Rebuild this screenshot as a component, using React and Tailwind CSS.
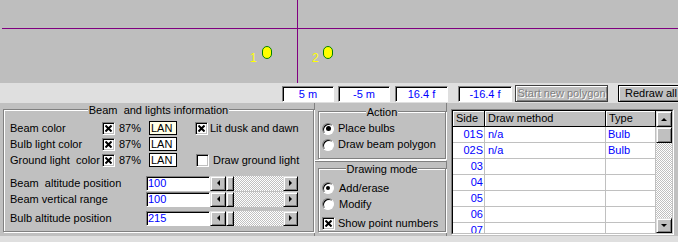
import React from "react";

function Check({ checked }) {
  return (
    <div className="w-[13px] h-[13px] shrink-0 bg-white border border-t-[#808080] border-l-[#808080] border-b-white border-r-white shadow-[inset_1px_1px_0_#000,inset_-1px_-1px_0_#c0c0c0] flex items-center justify-center">
      {checked && (
        <svg width="7" height="7" viewBox="0 0 7 7">
          <path d="M0.5 0.5L6.5 6.5M6.5 0.5L0.5 6.5" stroke="#000" strokeWidth="2" />
        </svg>
      )}
    </div>
  );
}

function Radio({ checked, big }) {
  return (
    <div className="w-[12px] h-[12px] shrink-0 rounded-full bg-white border border-t-[#808080] border-l-[#808080] border-b-white border-r-white shadow-[inset_1px_1px_0_#000] flex items-center justify-center">
      {checked && (big ? <div className="w-[5px] h-[5px] rounded-full bg-black" /> : <div className="w-[4px] h-[4px] rounded-full bg-black" />)}
    </div>
  );
}

function Arrow({ dir }) {
  const pts = {
    left: "4,0 4,6 1,3",
    right: "1,0 1,6 4,3",
    up: "0,4 6,4 3,1",
    down: "0,1 6,1 3,4",
  }[dir];
  const w = dir === "left" || dir === "right" ? 5 : 7;
  const h = dir === "left" || dir === "right" ? 7 : 5;
  return (
    <svg width={w} height={h} viewBox={`0 0 ${w} ${h}`}>
      <polygon points={pts} fill="#000" />
    </svg>
  );
}

function RaisedBtn({ className, children }) {
  return (
    <div className={"bg-[#c0c0c0] border border-t-[#dfdfdf] border-l-[#dfdfdf] border-b-black border-r-black shadow-[inset_1px_1px_0_#fff,inset_-1px_-1px_0_#808080] flex items-center justify-center " + className}>
      {children}
    </div>
  );
}

function Group({ title, className, children }) {
  return (
    <div className={"relative border border-[#808080] shadow-[inset_1px_1px_0_#fff,1px_1px_0_#fff] " + className}>
      <div className="absolute left-0 right-0 -top-[6px] flex justify-center">
        <span className="bg-[#c0c0c0] px-[1px] leading-[13px]">{title}</span>
      </div>
      {children}
    </div>
  );
}

function TopBox({ children, className }) {
  return (
    <div className={"h-[16px] shrink-0 bg-white border border-t-[#808080] border-l-[#808080] border-b-white border-r-white shadow-[inset_1px_1px_0_#000] flex items-center justify-center text-[#0000ff] " + className}>
      {children}
    </div>
  );
}

function Slider({ value }) {
  return (
    <div className="flex h-[15px] shrink-0">
      <div className="w-[64px] h-full bg-white border border-t-[#808080] border-l-[#808080] border-b-white border-r-white shadow-[inset_1px_1px_0_#000] text-[#0000ff] pl-[1px] flex items-center">
        {value}
      </div>
      <RaisedBtn className="w-[16px] h-full">
        <Arrow dir="left" />
      </RaisedBtn>
      <RaisedBtn className="w-[8px] h-full" />
      <div className="w-[49px] h-full bg-[image:repeating-conic-gradient(#c0c0c0_0_25%,#ffffff_0_50%)] bg-[length:2px_2px]" />
      <RaisedBtn className="w-[15px] h-full">
        <Arrow dir="right" />
      </RaisedBtn>
    </div>
  );
}

function ColorRow({ label, lanBg, right }) {
  return (
    <div className="flex items-center h-[16px]">
      <div className="w-[98px] shrink-0 pl-[6px] whitespace-pre">{label}</div>
      <Check checked />
      <div className="w-[34px] shrink-0 pl-[4px]">87%</div>
      <div className={"w-[28px] h-[14px] shrink-0 border border-black flex items-center pl-[1px] " + lanBg}>LAN</div>
      {right}
    </div>
  );
}

const rows = [
  ["01S", "n/a", "Bulb"],
  ["02S", "n/a", "Bulb"],
  ["03", "", ""],
  ["04", "", ""],
  ["05", "", ""],
  ["06", "", ""],
  ["07", "", ""],
];

export default function App() {
  return (
    <div className="w-[678px] h-[242px] overflow-hidden bg-[#dfdfdf] text-[11px] leading-[13px] text-black font-['Liberation_Sans',Arial,sans-serif]">
      {/* drawing canvas */}
      <div className="relative h-[83px] bg-[#bebebe]">
        <div className="absolute left-[2px] right-0 top-[28px] h-px bg-[#800080]" />
        <div className="absolute left-[297px] top-0 h-[83px] w-px bg-[#800080]" />
        <div className="absolute left-[262px] top-[46px] w-[10px] h-[13px] rounded-full bg-[#ffff00] border border-[#008000]" />
        <div className="absolute left-[323px] top-[46px] w-[10px] h-[13px] rounded-full bg-[#ffff00] border border-[#008000]" />
        <div className="absolute left-[250px] top-[51px] text-[12px] leading-[14px] text-[#ffff00]">1</div>
        <div className="absolute left-[312px] top-[51px] text-[12px] leading-[14px] text-[#ffff00]">2</div>
      </div>

      {/* toolbar */}
      <div className="h-[20px] flex items-start pt-[3px]">
        <TopBox className="ml-[282px] w-[52px]">5 m</TopBox>
        <TopBox className="ml-[4px] w-[52px]">-5 m</TopBox>
        <TopBox className="ml-[5px] w-[53px]">16.4 f</TopBox>
        <TopBox className="ml-[10px] w-[54px]">-16.4 f</TopBox>
        <div className="ml-[3px] -mt-[1px] w-[93px] h-[17px] shrink-0 bg-[#c0c0c0] border border-[#404040] shadow-[inset_1px_1px_0_#fff,inset_-1px_-1px_0_#808080] flex items-center justify-center text-[#808080] whitespace-nowrap [text-shadow:1px_1px_0_#fff]">
          Start new polygon
        </div>
        <div className="ml-[10px] -mt-[1px] w-[62px] h-[17px] shrink-0 bg-[#c0c0c0] border border-black shadow-[inset_1px_1px_0_#fff,inset_-1px_-1px_0_#808080] flex items-center pl-[6px] whitespace-nowrap">
          Redraw all
        </div>
      </div>

      {/* bottom panels */}
      <div className="h-[133px] flex bg-[#c0c0c0]">
        {/* left panel */}
        <div className="w-[315px] shrink-0 h-full border-r border-[#808080] pt-[6px] pl-[3px]">
          <Group title="Beam  and lights information" className="w-[311px] h-[123px] whitespace-pre">
            <div className="pt-[10px]">
              <ColorRow
                label="Beam color"
                lanBg="bg-[#ffffe8]"
                right={
                  <div className="flex items-center ml-[18px]">
                    <Check checked />
                    <span className="ml-[2px]">Lit dusk and dawn</span>
                  </div>
                }
              />
              <ColorRow label="Bulb light color" lanBg="bg-white" />
              <ColorRow
                label="Ground light  color"
                lanBg="bg-white"
                right={
                  <div className="flex items-center ml-[19px]">
                    <Check />
                    <span className="ml-[4px]">Draw ground light</span>
                  </div>
                }
              />
            </div>
            <div className="mt-[8px] flex items-center">
              <div className="w-[142px] shrink-0 pl-[6px]">Beam  altitude position</div>
              <Slider value="100" />
            </div>
            <div className="mt-[1px] flex items-center">
              <div className="w-[142px] shrink-0 pl-[6px]">Beam vertical range</div>
              <Slider value="100" />
            </div>
            <div className="mt-[4px] flex items-center">
              <div className="w-[142px] shrink-0 pl-[6px]">Bulb altitude position</div>
              <Slider value="215" />
            </div>
          </Group>
        </div>

        {/* middle column */}
        <div className="w-[132px] shrink-0 h-full flex flex-col">
          <div className="h-[58px] border-b border-white border-r border-r-[#808080] pt-[8px] pl-[3px]">
            <Group title="Action" className="w-[128px] h-[48px]">
              <div className="pt-[10px] pl-[3px] flex flex-col gap-[3px]">
                <div className="flex items-center h-[13px]">
                  <Radio checked big />
                  <span className="ml-[4px]">Place bulbs</span>
                </div>
                <div className="flex items-center h-[13px]">
                  <Radio />
                  <span className="ml-[4px]">Draw beam polygon</span>
                </div>
              </div>
            </Group>
          </div>
          <div className="flex-1 border-t border-[#808080] border-r border-r-[#808080] pt-[6px] pl-[3px]">
            <Group title="Drawing mode" className="w-[128px] h-[64px]">
              <div className="pt-[11px] pl-[3px] flex flex-col">
                <div className="flex items-center h-[16px]">
                  <Radio checked />
                  <span className="ml-[5px]">Add/erase</span>
                </div>
                <div className="flex items-center h-[16px]">
                  <Radio />
                  <span className="ml-[5px]">Modify</span>
                </div>
                <div className="flex items-center h-[16px] mt-[3px]">
                  <Check checked />
                  <span className="ml-[3px]">Show point numbers</span>
                </div>
              </div>
            </Group>
          </div>
        </div>

        {/* right grid */}
        <div className="flex-1 h-full pl-[4px] pt-[6px]">
          <div className="w-[223px] h-[126px] border border-t-[#808080] border-l-[#808080] border-b-white border-r-white">
            <div className="w-full h-full border border-t-black border-l-black border-b-[#c0c0c0] border-r-[#c0c0c0] flex bg-white overflow-hidden">
              <div className="w-[203px] flex flex-col">
                <div className="flex h-[16px] shrink-0">
                  <div className="w-[32px] bg-[#c0c0c0] border-r border-b border-black shadow-[inset_1px_1px_0_#fff] pl-[3px] flex items-center">Side</div>
                  <div className="w-[121px] bg-[#c0c0c0] border-r border-b border-black shadow-[inset_1px_1px_0_#fff] pl-[3px] flex items-center">Draw method</div>
                  <div className="w-[50px] bg-[#c0c0c0] border-r border-b border-black shadow-[inset_1px_1px_0_#fff] pl-[3px] flex items-center">Type</div>
                </div>
                {rows.map((r) => (
                  <div key={r[0]} className="flex h-[16px] shrink-0 text-[#0000ff]">
                    <div className="w-[32px] border-r border-b border-[#c0c0c0] pr-[1px] flex items-center justify-end">{r[0]}</div>
                    <div className="w-[121px] border-r border-b border-[#c0c0c0] pl-[3px] flex items-center">{r[1]}</div>
                    <div className="w-[50px] border-r border-b border-[#c0c0c0] pl-[2px] flex items-center">{r[2]}</div>
                  </div>
                ))}
              </div>
              <div className="w-[16px] flex flex-col">
                <RaisedBtn className="h-[16px] shrink-0">
                  <Arrow dir="up" />
                </RaisedBtn>
                <RaisedBtn className="h-[16px] shrink-0" />
                <div className="flex-1 bg-[image:repeating-conic-gradient(#c0c0c0_0_25%,#ffffff_0_50%)] bg-[length:2px_2px]" />
                <RaisedBtn className="h-[15px] shrink-0">
                  <Arrow dir="down" />
                </RaisedBtn>
              </div>
            </div>
          </div>
        </div>
      </div>
    </div>
  );
}
